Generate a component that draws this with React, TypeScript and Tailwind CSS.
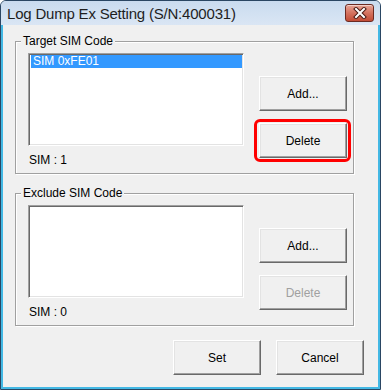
import React from "react";
import clsx from "clsx";

function WinButton({ label, disabled, className }: { label: string; disabled?: boolean; className?: string }) {
    return (
        <button
            type="button"
            className={clsx(
                "w-[88px] h-[35px] bg-[#f0f0f0] text-[12px] leading-none border border-t-white border-l-white border-b-[#696969] border-r-[#696969] shadow-[inset_-1px_-1px_0_#a0a0a0,inset_1px_1px_0_#e3e3e3]",
                disabled ? "text-[#a0a0a0]" : "text-black",
                className
            )}
        >
            {label}
        </button>
    );
}

function ListBox({ items, className }: { items: string[]; className?: string }) {
    return (
        <div
            className={clsx(
                "w-[216px] bg-white border border-t-[#a0a0a0] border-l-[#a0a0a0] border-b-white border-r-white shadow-[inset_1px_1px_0_#696969,inset_-1px_-1px_0_#e3e3e3] p-[1px] pl-[2px]",
                className
            )}
        >
            {items.map((it) => (
                <div key={it} className="h-[13px] bg-[#3399ff] text-white text-[12px] leading-[13px] pl-[2px]">
                    {it}
                </div>
            ))}
        </div>
    );
}

function GroupBox({
    title,
    items,
    count,
    deleteDisabled,
    highlight,
    className,
}: {
    title: string;
    items: string[];
    count: number;
    deleteDisabled?: boolean;
    highlight?: boolean;
    className?: string;
}) {
    return (
        <fieldset
            className={clsx(
                "w-[339px] border border-[#a0a0a0] shadow-[inset_1px_1px_0_white,1px_1px_0_white] pb-[6px]",
                className
            )}
        >
            <legend className="ml-[5px] px-[2px] bg-[#f0f0f0] text-[12px] leading-[14px]">{title}</legend>
            <div className="flex pl-[12px]">
                <div className="flex flex-col">
                    <ListBox items={items} className="mt-[5px] h-[93px]" />
                    <div className="mt-[7px] text-[12px] leading-[14px] pl-[1px]">SIM : {count}</div>
                </div>
                <div className="flex flex-col ml-[15px] mt-[28px] gap-[12px]">
                    <WinButton label="Add..." />
                    <div className="relative">
                        <WinButton label="Delete" disabled={deleteDisabled} />
                        {highlight && (
                            <div className="absolute -left-[5px] -right-[4px] -top-[4px] -bottom-[4px] border-[3px] border-[#ff0000] rounded-[6px]" />
                        )}
                    </div>
                </div>
            </div>
        </fieldset>
    );
}

export default function App() {
    return (
        <div className="w-[381px] h-[390px] flex flex-col overflow-hidden rounded-t-[6px] border border-[#2a4663] bg-[#d6e4f3] font-['Liberation_Sans',Arial,sans-serif] text-black">
            {/* title bar */}
            <div className="h-[24px] flex items-start justify-between bg-gradient-to-b from-[#c9dbef] to-[#dae6f4] pl-[6px] pr-[6px]">
                <span className="mt-[4px] text-[15px] leading-[18px] text-[#1e1e1e] tracking-[-0.2px]">Log Dump Ex Setting (S/N:400031)</span>
                <div className="mt-[3px] w-[29px] h-[18px] rounded-[3px] border border-[#6b2a22] bg-gradient-to-b from-[#e7a496] via-[#d4725f] to-[#c24b35] flex items-center justify-center shadow-[inset_0_1px_0_rgba(255,255,255,0.5)]">
                    <svg width="14" height="12" viewBox="0 0 14 12">
                        <path d="M3 2 L11 10 M11 2 L3 10" stroke="#4a1a14" strokeWidth="4" strokeLinecap="square" />
                        <path d="M3 2 L11 10 M11 2 L3 10" stroke="white" strokeWidth="2" strokeLinecap="square" />
                    </svg>
                </div>
            </div>

            {/* client area */}
            <div className="flex-1 flex flex-col bg-[#f0f0f0] border-l-2 border-r-2 border-b-2 border-[#43b8e4] pl-[12px] pt-[9px]">
                <GroupBox title="Target SIM Code" items={["SIM 0xFE01"]} count={1} highlight />
                <GroupBox title="Exclude SIM Code" items={[]} count={0} deleteDisabled className="mt-[12px]" />
                <div className="flex justify-end gap-[15px] mt-[14px] pr-[14px]">
                    <WinButton label="Set" />
                    <WinButton label="Cancel" />
                </div>
            </div>
        </div>
    );
}
